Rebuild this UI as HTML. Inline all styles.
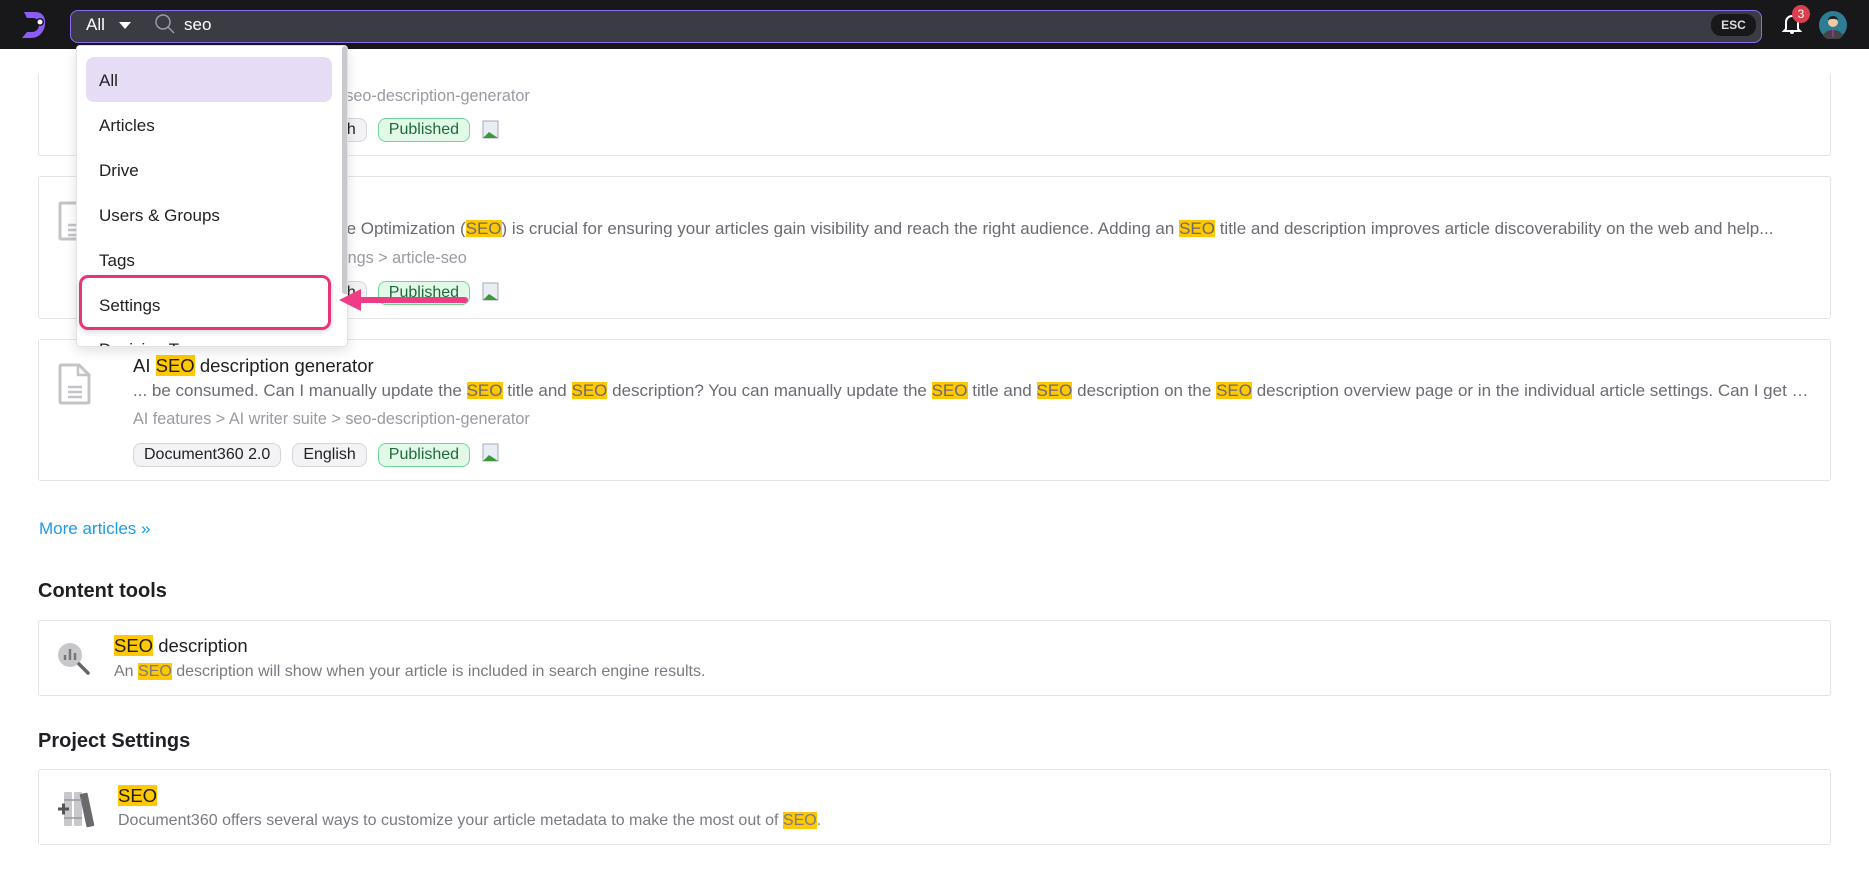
<!DOCTYPE html>
<html><head><meta charset="utf-8"><style>
*{box-sizing:border-box;margin:0;padding:0}
body{width:1869px;height:889px;overflow:hidden;background:#fff;font-family:"Liberation Sans",Arial,sans-serif;position:relative;color:#1f1f23}
.abs{position:absolute}
.top{left:0;top:0;width:1869px;height:49px;background:#18181b}
.search{left:70px;top:10px;width:1692px;height:33px;background:#3b3b44;border:1.5px solid #8b6cf0;border-radius:8px}
.card{position:absolute;left:38px;width:1793px;border:1px solid #e3e3e6;border-radius:3px;background:#fff}
.t{position:absolute;white-space:nowrap;line-height:1}
.hl{background:#ffc800}
.title{font-size:18.5px;color:#1f1f23}
.snip{font-size:17px;color:#6b6b73;width:1680px;overflow:hidden;text-overflow:ellipsis}
.bc{font-size:16.2px;color:#9a9aa2}
.sub{font-size:16px;color:#7a7a82}
.tags{position:absolute;left:94px;display:flex;gap:11px;align-items:center}
.tag{height:24px;border:1px solid #d6d6da;background:#f3f3f5;border-radius:8px;font-size:16px;line-height:22px;padding:0 10px;color:#222;white-space:nowrap}
.pub{background:#e2f8e9;border-color:#6fd894;color:#1e6b3a}
.dd{left:76px;top:45px;width:272px;height:302px;background:#fff;border:1px solid #e2e2e6;border-radius:4px;box-shadow:0 4px 12px rgba(0,0,0,.12);overflow:hidden}
.it{position:absolute;left:22px;font-size:17px;color:#222;line-height:1}
h2{position:absolute;font-size:20px;font-weight:bold;color:#1f1f23;left:38px;line-height:1}
</style></head><body>

<!-- card1 (scrolled) -->
<div class="card" style="top:14px;height:142px">
 <div class="t snip" style="left:94px;top:42px">... be consumed. Can I manually update the <span class="hl">SEO</span> title and <span class="hl">SEO</span> description? You can manually update</div>
 <div class="t bc" style="left:94px;top:73px">AI features &gt; AI writer suite &gt; seo-description-generator</div>
 <div class="tags" style="top:103px"><span class="tag">Document360 2.0</span><span class="tag">English</span><span class="tag pub">Published</span></div>
</div>
<div class="abs" style="left:0;top:49px;width:1869px;height:25px;background:#fff"></div>

<!-- card2 -->
<div class="card" style="top:176px;height:143px">
 <svg class="abs" style="left:18px;top:24px" width="36" height="40" viewBox="0 0 36 40"><path d="M4 2h18l10 10v25a1 1 0 0 1-1 1H4a1 1 0 0 1-1-1V3a1 1 0 0 1 1-1z" fill="none" stroke="#c4c4c8" stroke-width="3"/><path d="M11 24h14M11 29h14M11 34h14" stroke="#c4c4c8" stroke-width="2.5"/></svg>
 <div class="t title" style="left:94px;top:17px">Article SEO</div>
 <div class="t snip" style="left:94px;top:43px">... on the web. Search Engine  Optimization (<span class="hl">SEO</span>) is crucial for ensuring your articles gain visibility and reach the right audience. Adding an <span class="hl">SEO</span> title and description improves article discoverability on the web and help...</div>
 <div class="t bc" style="left:94px;top:73px">Editor &amp; settings &gt; Article settings &gt; article-seo</div>
 <div class="tags" style="top:104px"><span class="tag">Document360 2.0</span><span class="tag">English</span><span class="tag pub">Published</span></div>
</div>

<!-- card3 -->
<div class="card" style="top:339px;height:142px">
 <svg class="abs" style="left:18px;top:23px" width="36" height="42" viewBox="0 0 36 42"><path d="M4 2h18l10 10v27a1 1 0 0 1-1 1H4a1 1 0 0 1-1-1V3a1 1 0 0 1 1-1z" fill="none" stroke="#c4c4c8" stroke-width="3"/><path d="M21 2v10h11" fill="none" stroke="#c4c4c8" stroke-width="2.5"/><path d="M11 24h14M11 29h14M11 34h14" stroke="#c4c4c8" stroke-width="2.5"/></svg>
 <div class="t title" style="left:94px;top:17px">AI <span class="hl">SEO</span> description generator</div>
 <div class="t snip" style="left:94px;top:42px">... be consumed. Can I manually update the <span class="hl">SEO</span> title and <span class="hl">SEO</span> description? You can manually update the <span class="hl">SEO</span> title and <span class="hl">SEO</span> description on the <span class="hl">SEO</span> description overview page or in the individual article settings. Can I get more help</div>
 <div class="t bc" style="left:94px;top:71px">AI features &gt; AI writer suite &gt; seo-description-generator</div>
 <div class="tags" style="top:103px"><span class="tag">Document360 2.0</span><span class="tag">English</span><span class="tag pub">Published</span></div>
</div>
<!-- broken image icons -->
<svg class="abs" style="left:481px;top:120px" width="20" height="20"><rect x="2" y="1" width="15" height="17" fill="#e8eef4" stroke="#aab" /><path d="M2 18l6-6 9 6z" fill="#3a9a3a"/></svg>
<svg class="abs" style="left:481px;top:282px" width="20" height="20"><rect x="2" y="1" width="15" height="17" fill="#e8eef4" stroke="#aab" /><path d="M2 18l6-6 9 6z" fill="#3a9a3a"/></svg>
<svg class="abs" style="left:481px;top:443px" width="20" height="20"><rect x="2" y="1" width="15" height="17" fill="#e8eef4" stroke="#aab" /><path d="M2 18l6-6 9 6z" fill="#3a9a3a"/></svg>

<div class="t" style="left:39px;top:520px;font-size:17px;color:#1a9be8">More articles <span style="font-size:17px">»</span></div>

<h2 style="top:581px">Content tools</h2>
<div class="card" style="top:620px;height:76px">
 <svg class="abs" style="left:17px;top:20px" width="36" height="36" viewBox="0 0 36 36"><circle cx="14" cy="14" r="12" fill="#c8c8cc"/><path d="M23 23l9 9" stroke="#666" stroke-width="3.5" stroke-linecap="round"/><path d="M9 19v-5M14 19V8M19 19v-7" stroke="#777" stroke-width="2.5"/></svg>
 <div class="t title" style="left:75px;top:16px"><span class="hl">SEO</span> description</div>
 <div class="t sub" style="left:75px;top:43px">An <span class="hl">SEO</span> description will show when your article is included in search engine results.</div>
</div>

<h2 style="top:731px">Project Settings</h2>
<div class="card" style="top:769px;height:76px">
 <svg class="abs" style="left:17px;top:18px" width="42" height="42" viewBox="0 0 42 42"><rect x="8" y="4" width="8" height="34" rx="1" fill="#c8c8cc"/><rect x="18" y="4" width="8" height="34" rx="1" fill="#c8c8cc"/><rect x="27" y="5" width="8" height="34" rx="1" fill="#6a6a6e" transform="rotate(-12 31 22)"/><path d="M8 12h18M8 30h18" stroke="#999" stroke-width="1.5"/><path d="M2 21h11M7.5 15.5v11" stroke="#555" stroke-width="3"/></svg>
 <div class="t title" style="left:79px;top:17px"><span class="hl">SEO</span></div>
 <div class="t sub" style="left:79px;top:43px">Document360 offers several ways to customize your article metadata to make the most out of <span class="hl">SEO</span>.</div>
</div>

<!-- top bar -->
<div class="abs top"></div>
<svg class="abs" style="left:19px;top:9px" width="32" height="32" viewBox="0 0 32 32"><path d="M5 3h11c8 0 11 6 10 13-1 7-6 13-14 13H3l5-6h5c4 0 7-3 7-7s-2-7-6-7H8z" fill="#8b5cf6"/><circle cx="21" cy="13" r="4" fill="#18181b"/><circle cx="21" cy="13" r="2.5" fill="#fff"/></svg>
<div class="abs search"></div>
<div class="t" style="left:86px;top:16px;font-size:17px;color:#fff">All</div>
<svg class="abs" style="left:118px;top:21px" width="14" height="9"><path d="M1 1h12L7 8z" fill="#fff"/></svg>
<svg class="abs" style="left:154px;top:13px" width="22" height="22" viewBox="0 0 22 22"><circle cx="9" cy="9" r="7" fill="none" stroke="#9a9aa2" stroke-width="1.5"/><path d="M14 14l6 6" stroke="#9a9aa2" stroke-width="1.5"/></svg>
<div class="t" style="left:184px;top:16px;font-size:17px;color:#fff">seo</div>
<div class="abs" style="left:1711px;top:14px;width:45px;height:22px;background:#18181b;border-radius:10px;color:#ddd;font-size:12px;font-weight:bold;text-align:center;line-height:22px">ESC</div>
<svg class="abs" style="left:1782px;top:13px" width="20" height="22" viewBox="0 0 20 22"><path d="M4 16V9a6 6 0 0 1 12 0v7l2 2H2z" fill="none" stroke="#fff" stroke-width="2"/><path d="M8 19a2 2 0 0 0 4 0" fill="#fff"/></svg>
<div class="abs" style="left:1792px;top:5px;width:18px;height:18px;border-radius:50%;background:#d9404f;color:#fff;font-size:12px;text-align:center;line-height:18px">3</div>
<svg class="abs" style="left:1819px;top:11px" width="28" height="28" viewBox="0 0 28 28"><circle cx="14" cy="14" r="14" fill="#2d7d94"/><path d="M4 25c2-5 6-6 10-6s8 1 10 6a14 14 0 0 1-20 0z" fill="#444"/><circle cx="14" cy="11" r="5" fill="#f1c9a5"/><path d="M9 10c0-4 3-5 5-5s5 1 5 5c-1-2-3-2-5-2s-4 0-5 2z" fill="#222"/><path d="M13 19h2l0 7h-2z" fill="#8a3a8a"/></svg>

<!-- dropdown -->
<div class="abs dd">
 <div class="abs" style="left:9px;top:11px;width:246px;height:45px;background:#e6dcf6;border-radius:8px"></div>
 <div class="it" style="top:26px">All</div>
 <div class="it" style="top:71px">Articles</div>
 <div class="it" style="top:116px">Drive</div>
 <div class="it" style="top:161px">Users &amp; Groups</div>
 <div class="it" style="top:206px">Tags</div>
 <div class="it" style="top:251px">Settings</div>
 <div class="it" style="top:295px">Decision Tree</div>
 <div class="abs" style="left:265px;top:0;width:7px;height:248px;background:#c9c9cd;border-radius:3px"></div>
</div>
<div class="abs" style="left:79px;top:275px;width:252px;height:55px;border:3px solid #e8357a;border-radius:9px;box-shadow:0 2px 6px rgba(0,0,0,.15)"></div>
<svg class="abs" style="left:335px;top:285px" width="136" height="30"><path d="M130 15H22" stroke="#ee3d84" stroke-width="6" stroke-linecap="round"/><path d="M4 15l22-11v22z" fill="#ee3d84"/></svg>
</body></html>
